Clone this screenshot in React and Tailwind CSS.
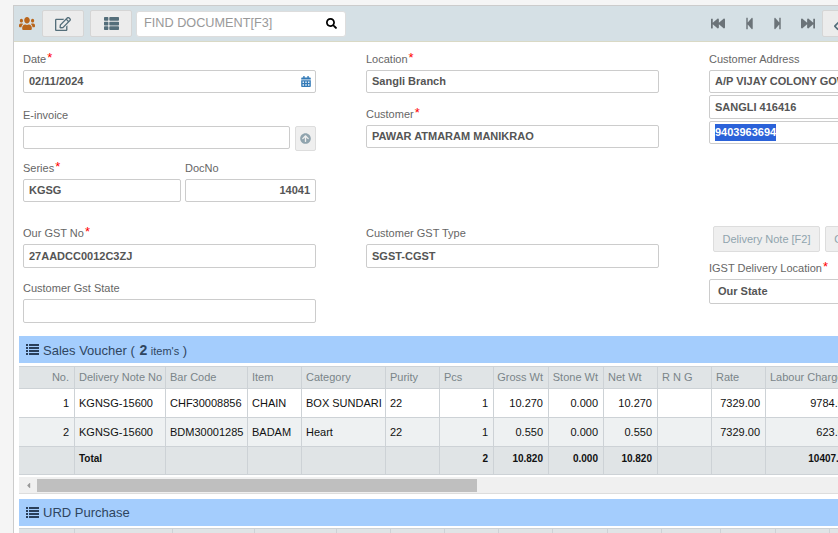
import React from 'react';
import {
  FaUsers,
  FaRegEdit,
  FaThList,
  FaSearch,
  FaFastBackward,
  FaStepBackward,
  FaStepForward,
  FaFastForward,
  FaCalendarAlt,
  FaArrowCircleUp,
  FaCaretLeft,
  FaEraser,
} from 'react-icons/fa';

const inputClass =
  'flex h-[23px] items-center rounded-[2px] border border-[#ccc] bg-white px-[5px] text-[11px] font-bold whitespace-nowrap overflow-hidden text-[#555]';

const Label = ({ text, required }) => (
  <div className="flex h-[19px] items-start pt-[1px] text-[11px] leading-[14px] text-[#666] whitespace-nowrap">
    {text}
    {required && <span className="ml-[1px] -mt-[1px] text-[13px] text-[#f00]">*</span>}
  </div>
);

const Field = ({ label, required, value, right, className = '' }) => (
  <div className={className}>
    <Label text={label} required={required} />
    <div className={`${inputClass} ${right ? 'justify-end' : ''}`}>{value}</div>
  </div>
);

const salesCols = ['w-[56px]', 'w-[91px]', 'w-[82px]', 'w-[54px]', 'w-[84px]', 'w-[54px]', 'w-[54px]', 'w-[55px]', 'w-[55px]', 'w-[54px]', 'w-[54px]', 'w-[54px]', 'w-[90px]'];

const salesHead = [
  ['No.', true],
  ['Delivery Note No'],
  ['Bar Code'],
  ['Item'],
  ['Category'],
  ['Purity'],
  ['Pcs'],
  ['Gross Wt', true],
  ['Stone Wt', true],
  ['Net Wt'],
  ['R N G'],
  ['Rate'],
  ['Labour Charge'],
];

const rows = [
  ['1', 'KGNSG-15600', 'CHF30008856', 'CHAIN', 'BOX SUNDARI', '22', '1', '10.270', '0.000', '10.270', '', '7329.00', '9784.00'],
  ['2', 'KGNSG-15600', 'BDM30001285', 'BADAM', 'Heart', '22', '1', '0.550', '0.000', '0.550', '', '7329.00', '623.00'],
];

const totals = ['', 'Total', '', '', '', '', '2', '10.820', '0.000', '10.820', '', '', '10407.00'];
const numeric = [0, 6, 7, 8, 9, 11, 12];

const urdCols = ['w-[56px]', 'w-[98px]', 'w-[82px]', 'w-[82px]', 'w-[54px]', 'w-[54px]', 'w-[54px]', 'w-[54px]', 'w-[55px]', 'w-[54px]', 'w-[59px]', 'w-[55px]', 'w-[54px]', 'w-[54px]'];

// font-awesome 4 "list": small squares and long bars, almost touching
const ListIcon = () => (
  <svg viewBox="0 0 13 11" className="h-[11px] w-[13px] fill-[#2a3f5a]">
    <path d="M0 0h2v2H0zM3 0h10v2H3zM0 3h2v2H0zM3 3h10v2H3zM0 6h2v2H0zM3 6h10v2H3zM0 9h2v2H0zM3 9h10v2H3z" />
  </svg>
);

const SectionTitle = ({ children }) => (
  <div className="flex h-[27px] items-center gap-[4px] bg-[#a4cdfd] pl-[7px] text-[13px] text-[#2f4560] whitespace-nowrap">
    <ListIcon />
    <span className="pt-[1px]">{children}</span>
  </div>
);

export default function App() {
  return (
    <div className="h-[533px] w-[838px] overflow-hidden bg-[#f5f5f5] pt-[5px] pl-[13px] font-['Liberation_Sans',Arial,sans-serif]">
      <div className="w-[900px] border-t border-l border-[#ccc] bg-white">
        <div className="flex h-[36px] items-center border-b border-[#d9d9c5] bg-[#d5e0e5] pl-[5px]">
          <FaUsers preserveAspectRatio="none" className="h-[15px] w-[16px] text-[#b9651b]" />
          <button className="ml-[7px] flex h-[27px] w-[42px] items-center justify-center rounded-[2px] border border-[#d5d5d5] bg-[#ececec] text-[#546e7a]">
            <FaRegEdit className="h-[16px] w-[16px]" />
          </button>
          <button className="ml-[6px] flex h-[27px] w-[42px] items-center justify-center rounded-[2px] border border-[#d5d5d5] bg-[#ececec] text-[#546e7a]">
            <FaThList className="h-[15px] w-[17px]" />
          </button>
          <div className="ml-[4px] flex h-[26px] w-[210px] items-center justify-between rounded-[3px] border border-[#ddd] bg-white pr-[8px] pl-[7px] text-[12.7px] text-[#999]">
            <span className="pt-[1px]">FIND DOCUMENT[F3]</span>
            <FaSearch className="h-[11px] w-[11px] text-black" />
          </div>
          <div className="ml-[365px] flex items-center text-[#6b7378]">
            <FaFastBackward preserveAspectRatio="none" className="h-[13px] w-[14px]" />
            <FaStepBackward preserveAspectRatio="none" className="ml-[20px] h-[13px] w-[9px]" />
            <FaStepForward preserveAspectRatio="none" className="ml-[19px] h-[13px] w-[9px]" />
            <FaFastForward preserveAspectRatio="none" className="ml-[19px] h-[13px] w-[14px]" />
          </div>
          <button className="ml-[7px] flex h-[27px] w-[42px] items-center justify-center rounded-[2px] border border-[#d5d5d5] bg-[#ececec] pr-[4px] text-[#546e7a]">
            <FaEraser className="h-[14px] w-[14px]" />
          </button>
        </div>

        <div className="flex gap-[50px] pt-[9px] pl-[9px]">
          <div className="w-[293px] shrink-0">
            <div className="relative">
              <Field label="Date" required value="02/11/2024" />
              <FaCalendarAlt className="absolute right-[5px] bottom-[6px] h-[11px] w-[10px] text-[#337ab7]" />
            </div>
            <div className="mt-[14px]">
              <Label text="E-invoice" />
              <div className="flex gap-[5px]">
                <div className={`${inputClass} w-[267px]`} />
                <div className="flex h-[25px] w-[21px] items-center justify-center rounded-[2px] border border-[#ddd] bg-[#efefef] text-[#90a4ae]">
                  <FaArrowCircleUp className="h-[11px] w-[11px]" />
                </div>
              </div>
            </div>
            <div className="mt-[9px] flex gap-[4px]">
              <Field label="Series" required value="KGSG" className="w-[158px]" />
              <Field label="DocNo" value="14041" right className="w-[131px]" />
            </div>
            <Field label="Our GST No" required value="27AADCC0012C3ZJ" className="mt-[23px] [&>div:last-child]:h-[24px]" />
            <Field label="Customer Gst State" value="" className="mt-[12px] [&>div:last-child]:h-[24px]" />
          </div>

          <div className="w-[293px] shrink-0">
            <Field label="Location" required value="Sangli Branch" />
            <Field label="Customer" required value="PAWAR ATMARAM MANIKRAO" className="mt-[13px]" />
            <Field label="Customer GST Type" value="SGST-CGST" className="mt-[77px] [&>div:last-child]:h-[24px]" />
          </div>

          <div className="w-[293px] shrink-0">
            <Label text="Customer Address" />
            <div className={inputClass}>A/P VIJAY COLONY GOWANDE</div>
            <div className={`${inputClass} mt-[2px] h-[24px]`}>SANGLI 416416</div>
            <div className={`${inputClass} mt-[2px]`}>
              <span className="bg-[#2b62d9] text-white">9403963694</span>
            </div>
            <div className="mt-[82px] ml-[4px] flex gap-[5px]">
              <button className="h-[26px] w-[107px] rounded-[2px] border border-[#ddd] bg-[#efefef] text-[11px] text-[#90a4ae]">
                Delivery Note [F2]
              </button>
              <button className="h-[26px] w-[107px] rounded-[2px] border border-[#ddd] bg-[#efefef] pr-[80px] text-[11px] text-[#90a4ae]">
                O
              </button>
            </div>
            <Field label="IGST Delivery Location" required value="Our State" className="mt-[8px] [&>div:last-child]:h-[25px] [&>div:last-child]:pl-[8px]" />
          </div>
        </div>

        <div className="mt-[13px] ml-[5px]">
          <SectionTitle>
            Sales Voucher ( <b className="ml-[1px] text-[14px]">2</b> <span className="text-[11px]">item's</span> )
          </SectionTitle>

          <div className="mt-[3px] flex h-[23px] items-center bg-[#e0e4e6] border-y border-[#cdd2d6] text-[11px] text-[#7a8489]">
            {salesHead.map(([text, right], i) => (
              <div key={text} className={`${salesCols[i]} flex h-full shrink-0 items-center border-r border-[#cdd2d6] pr-[5px] pl-[4px] whitespace-nowrap ${right ? 'justify-end' : ''}`}>
                {text}
              </div>
            ))}
          </div>
          {rows.map((row, r) => (
            <div key={row[0]} className={`flex h-[29px] items-center border-b border-[#cdd2d6] text-[11px] text-[#111] ${r === 1 ? 'bg-[#eef1f2]' : 'bg-white'}`}>
              {row.map((cell, i) => (
                <div key={i} className={`${salesCols[i]} flex h-full shrink-0 items-center border-r border-[#cdd2d6] pr-[5px] pl-[4px] whitespace-nowrap ${numeric.includes(i) ? 'justify-end' : ''}`}>
                  {cell}
                </div>
              ))}
            </div>
          ))}
          <div className="flex h-[28px] items-center border-b border-[#cdd2d6] bg-[#e0e4e6] text-[10px] font-bold text-[#111]">
            {totals.map((cell, i) => (
              <div key={i} className={`${salesCols[i]} flex h-full shrink-0 items-center border-r border-[#cdd2d6] pr-[5px] pb-[4px] pl-[4px] whitespace-nowrap ${numeric.includes(i) ? 'justify-end' : ''}`}>
                {cell}
              </div>
            ))}
          </div>

          <div className="mt-[2px] flex h-[17px] items-center border-b border-[#ddd] bg-[#f0f0f0]">
            <div className="flex w-[18px] shrink-0 items-center justify-center text-[#999]">
              <FaCaretLeft className="h-[9px] w-[9px]" />
            </div>
            <div className="h-[13px] w-[440px] bg-[#bfbfbf]" />
          </div>

          <div className="mt-[5px]">
            <SectionTitle>URD Purchase</SectionTitle>
          </div>
          <div className="mt-[2px] flex h-[23px] border-t border-[#cdd2d6] bg-[#e0e4e6]">
            {urdCols.map((w, i) => (
              <div key={i} className={`${w} h-full shrink-0 border-r border-[#cdd2d6]`} />
            ))}
          </div>
        </div>
      </div>
    </div>
  );
}
